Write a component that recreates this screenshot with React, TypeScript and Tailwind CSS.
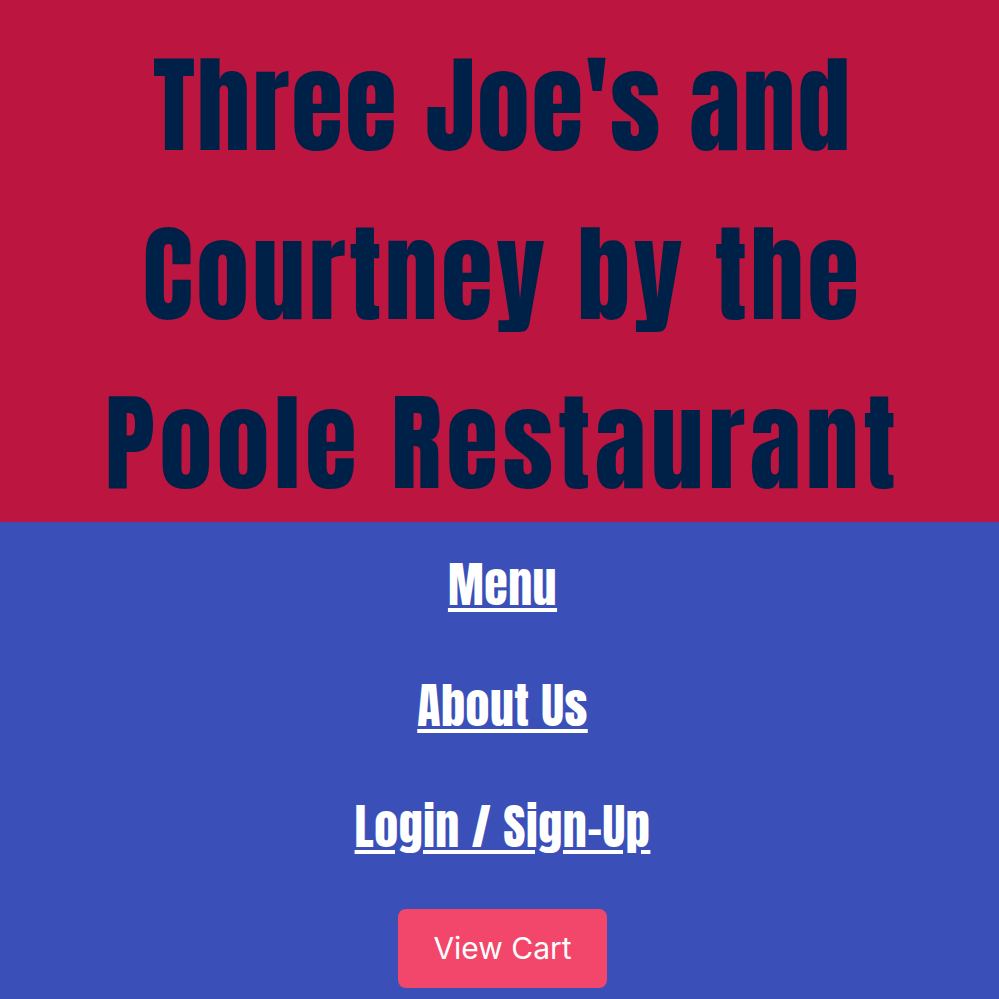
import React from "react";

export default function App() {
  const impact = { fontFamily: 'Impact, "Anton", "Oswald", "DejaVu Sans Condensed", "Liberation Sans Narrow", sans-serif' };
  return (
    <div className="w-full min-h-screen bg-[#3a50b8] pl-[6px]">
      <header className="bg-[#bb1540] h-[522px] flex justify-center pt-[21px] -ml-[6px] pl-[6px]">
        <h1
          className="text-center text-[#002147] text-[106px] leading-[169px] w-full"
          style={impact}
        >
          <span className="tracking-[2px]">Three Joe's and</span>
          <br />
          <span className="tracking-[3.5px]">Courtney by the</span>
          <br />
          <span className="tracking-[4.7px]">Poole Restaurant</span>
        </h1>
      </header>
      <nav className="flex flex-col items-center pt-[33px] gap-[61px]">
        {["Menu", "About Us", "Login / Sign-Up"].map((t) => (
          <a
            key={t}
            href="#"
            className="text-white underline text-[48px] leading-[60px] tracking-[0.5px]"
            style={impact}
          >
            {t}
          </a>
        ))}
        <button
          className="bg-[#f2476a] text-white rounded-lg w-[209px] h-[79px] text-[30px] -mt-[9px]"
          style={{ fontFamily: 'Inter, sans-serif' }}
        >
          View Cart
        </button>
      </nav>
    </div>
  );
}
